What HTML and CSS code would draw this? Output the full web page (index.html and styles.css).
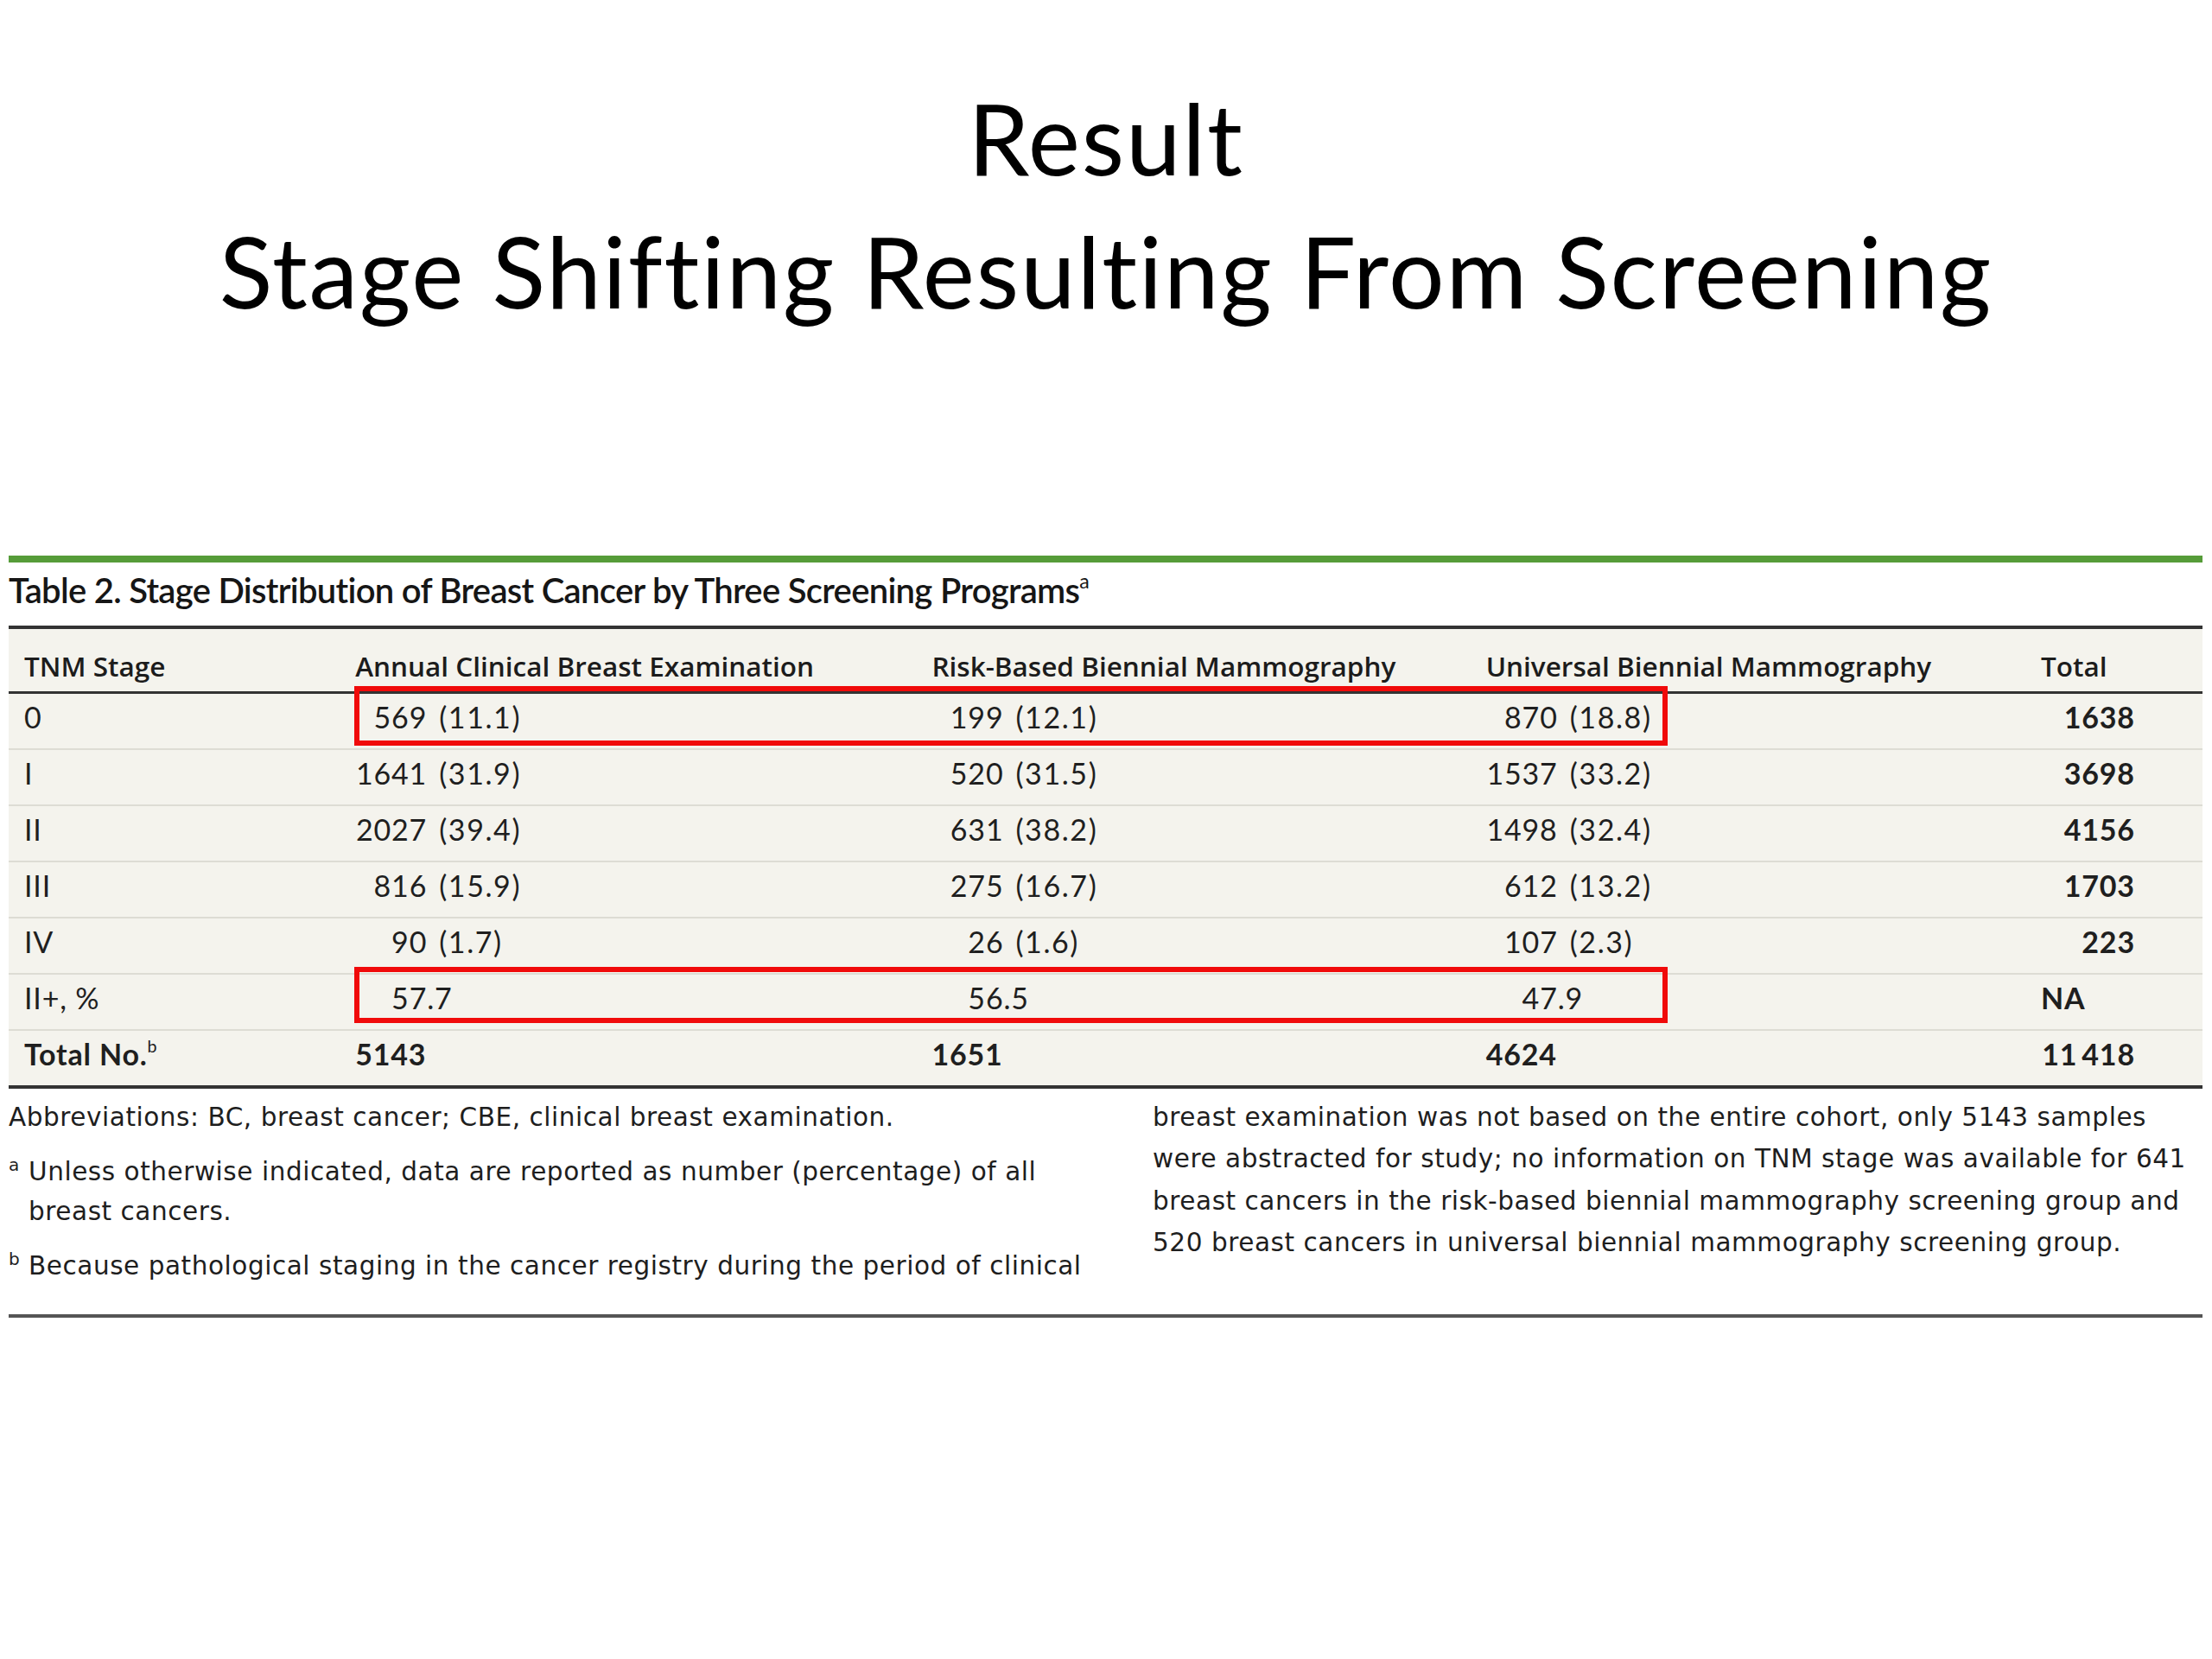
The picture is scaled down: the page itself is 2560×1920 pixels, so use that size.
FILE: index.html
```html
<!DOCTYPE html>
<html lang="en">
<head>
<meta charset="utf-8">
<title>Result - Stage Shifting Resulting From Screening</title>
<link rel="stylesheet" href="styles.css">
</head>
<body>
<div class="slide">
  <h1 class="title">
    <span class="title-line">Result</span>
    <span class="title-line">Stage Shifting Resulting From Screening</span>
  </h1>

  <section class="table-block">
    <div class="caption">Table 2. Stage Distribution of Breast Cancer by Three Screening Programs<sup class="sup">a</sup></div>
    <div class="table-wrap">
      <table class="data">
        <colgroup>
          <col class="c1"><col class="c2"><col class="c3"><col class="c4"><col class="c5">
        </colgroup>
        <thead>
          <tr>
            <th>TNM Stage</th>
            <th>Annual Clinical Breast Examination</th>
            <th>Risk-Based Biennial Mammography</th>
            <th>Universal Biennial Mammography</th>
            <th>Total</th>
          </tr>
        </thead>
        <tbody>
          <tr>
            <td>0</td>
            <td><span class="n">569</span><span class="p">(11.1)</span></td>
            <td><span class="n">199</span><span class="p">(12.1)</span></td>
            <td><span class="n">870</span><span class="p">(18.8)</span></td>
            <td><span class="t">1638</span></td>
          </tr>
          <tr>
            <td>I</td>
            <td><span class="n">1641</span><span class="p">(31.9)</span></td>
            <td><span class="n">520</span><span class="p">(31.5)</span></td>
            <td><span class="n">1537</span><span class="p">(33.2)</span></td>
            <td><span class="t">3698</span></td>
          </tr>
          <tr>
            <td>II</td>
            <td><span class="n">2027</span><span class="p">(39.4)</span></td>
            <td><span class="n">631</span><span class="p">(38.2)</span></td>
            <td><span class="n">1498</span><span class="p">(32.4)</span></td>
            <td><span class="t">4156</span></td>
          </tr>
          <tr>
            <td>III</td>
            <td><span class="n">816</span><span class="p">(15.9)</span></td>
            <td><span class="n">275</span><span class="p">(16.7)</span></td>
            <td><span class="n">612</span><span class="p">(13.2)</span></td>
            <td><span class="t">1703</span></td>
          </tr>
          <tr>
            <td>IV</td>
            <td><span class="n">90</span><span class="p">(1.7)</span></td>
            <td><span class="n">26</span><span class="p">(1.6)</span></td>
            <td><span class="n">107</span><span class="p">(2.3)</span></td>
            <td><span class="t">223</span></td>
          </tr>
          <tr>
            <td>II+, %</td>
            <td><span class="n">57</span>.7</td>
            <td><span class="n">56</span>.5</td>
            <td><span class="n">47</span>.9</td>
            <td class="bold">NA</td>
          </tr>
          <tr class="total">
            <td>Total No.<sup class="sup">b</sup></td>
            <td>5143</td>
            <td>1651</td>
            <td>4624</td>
            <td><span class="t">11&#8201;418</span></td>
          </tr>
        </tbody>
      </table>
      <div class="highlight hl-top"></div>
      <div class="highlight hl-bottom"></div>
    </div>

    <div class="notes">
      <div class="notes-col notes-left">
        <p class="note">Abbreviations: BC, breast cancer; CBE, clinical breast examination.</p>
        <p class="note hang"><sup class="sup">a</sup>Unless otherwise indicated, data are reported as number (percentage) of all<br>breast cancers.</p>
        <p class="note hang"><sup class="sup">b</sup>Because pathological staging in the cancer registry during the period of clinical</p>
      </div>
      <div class="notes-col notes-right">
        <p class="note">breast examination was not based on the entire cohort, only 5143 samples<br>were abstracted for study; no information on TNM stage was available for 641<br>breast cancers in the risk-based biennial mammography screening group and<br>520 breast cancers in universal biennial mammography screening group.</p>
      </div>
    </div>
  </section>
</div>
</body>
</html>
```
FILE: styles.css
```css
html, body {
  margin: 0;
  padding: 0;
  background: #ffffff;
}

body {
  font-family: Lato, "Liberation Sans", sans-serif;
  color: #1c1c1c;
}

.slide {
  width: 2560px;
  height: 1920px;
  overflow: hidden;
}

.title {
  margin: 82px 0 0;
  font-size: 114px;
  line-height: 154px;
  font-weight: 400;
  letter-spacing: 1.85px;
  font-variant-ligatures: none;
  text-align: center;
  color: #000000;
}

.title-line {
  display: block;
}

.table-block {
  margin: 253px 11px 0 10px;
  border-top: 8px solid #569c39;
}

.caption {
  margin: 4px 0 13px 0;
  font-size: 40px;
  line-height: 56px;
  font-weight: 600;
  letter-spacing: -0.7px;
  color: #161616;
  white-space: nowrap;
}

.sup {
  font-size: 0.58em;
  line-height: 0;
  vertical-align: 0.75em;
  font-weight: 400;
  letter-spacing: 0;
}

.table-wrap {
  position: relative;
}

.data {
  width: 100%;
  table-layout: fixed;
  border-spacing: 0;
  background: #f4f3ed;
  border-top: 4px solid #333333;
}

.c1 { width: 401px; }
.c2 { width: 667px; }
.c3 { width: 641px; }
.c4 { width: 642px; }
.c5 { width: 187px; }

.data th {
  text-align: left;
  font-family: "Open Sans", Lato, sans-serif;
  font-size: 31.5px;
  line-height: 40px;
  font-weight: 600;
  padding: 23px 0 9px 0;
  border-bottom: 3px solid #333333;
  white-space: nowrap;
  color: #1c1c1c;
}

.data td {
  font-size: 34px;
  line-height: 53px;
  letter-spacing: 0.8px;
  padding: 0 0 10px 0;
  border-bottom: 2px solid #dddcd4;
  white-space: nowrap;
  color: #1f1f1f;
}

.data th:first-child,
.data td:first-child {
  padding-left: 18px;
}

.data tr.total td {
  font-weight: 700;
  border-bottom: 4px solid #333333;
}

.n {
  display: inline-block;
  width: 83px;
  text-align: right;
}

.p {
  margin-left: 14px;
  letter-spacing: 1.6px;
}

.t {
  display: inline-block;
  width: 109px;
  text-align: right;
  font-weight: 700;
}

.bold {
  font-weight: 700;
}

.highlight {
  position: absolute;
  box-sizing: border-box;
  border: 6px solid #f00a0a;
  left: 400px;
  width: 1520px;
}

.hl-top {
  top: 70px;
  height: 69px;
}

.hl-bottom {
  top: 395px;
  height: 65px;
}

.notes {
  display: flex;
  gap: 83px;
  padding-top: 9px;
  padding-bottom: 33px;
  border-bottom: 4px solid #555555;
}

.notes-col {
  font-family: "DejaVu Sans", "Open Sans", sans-serif;
  font-size: 29.5px;
  letter-spacing: 0.55px;
  color: #1e1e1e;
}

.notes-left {
  width: 1241px;
  flex: none;
  padding-top: 1px;
  line-height: 46px;
}

.notes-right {
  flex: 1;
  line-height: 48.3px;
}

.note {
  margin: 0;
  white-space: nowrap;
}

.note + .note {
  margin-top: 17px;
}

.note.hang {
  padding-left: 23px;
  text-indent: -23px;
}

.note.hang .sup {
  display: inline-block;
  width: 23px;
  text-indent: 0;
  font-size: 0.68em;
  vertical-align: 0.55em;
  letter-spacing: 0.2px;
}
```
